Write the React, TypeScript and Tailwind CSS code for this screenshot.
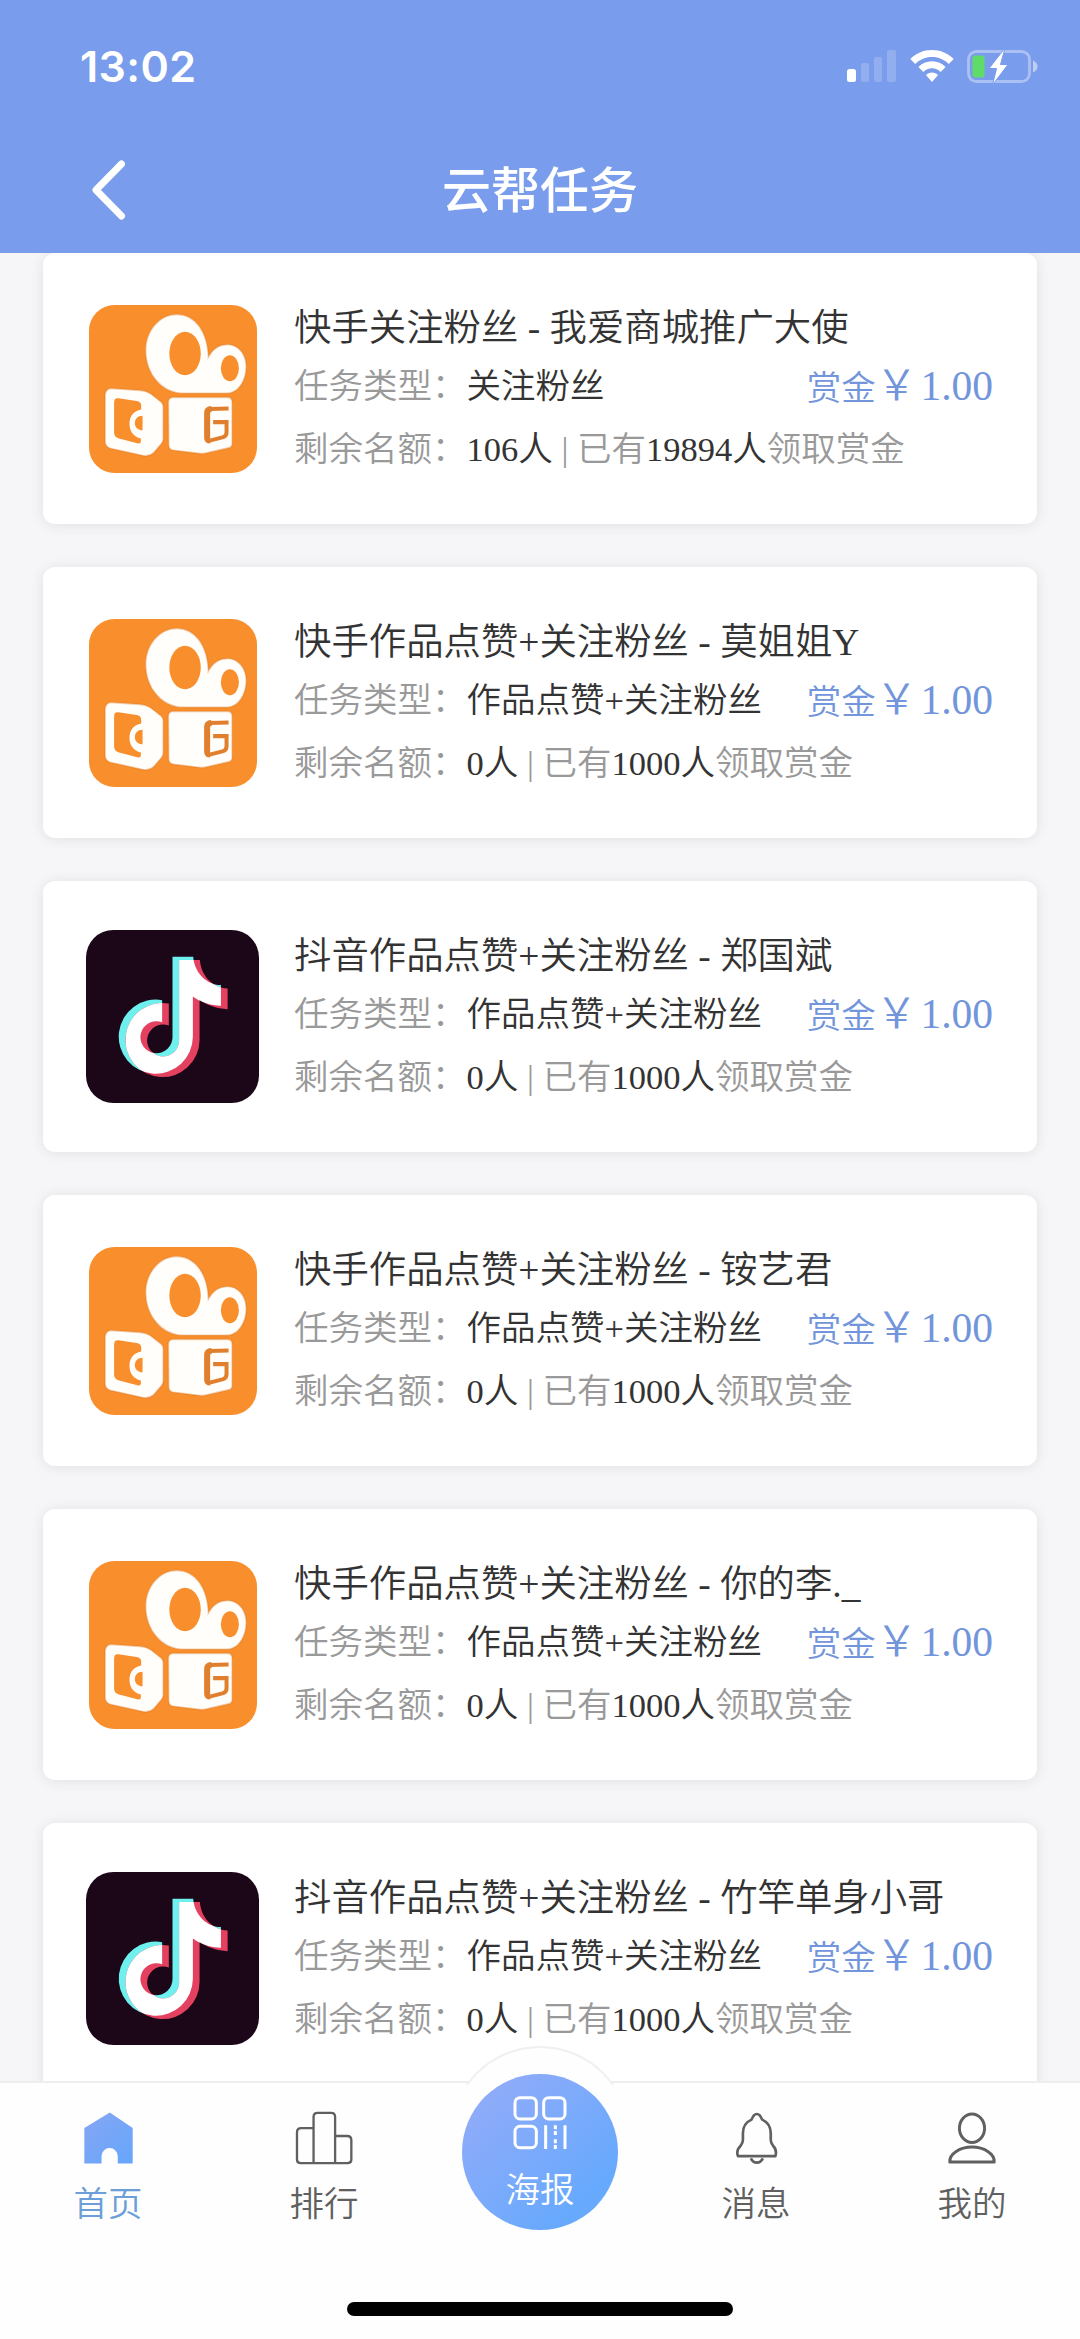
import { ReactNode } from "react";

type App = "kuaishou" | "douyin";

type Task = {
  app: App;
  title: string;
  type: string;
  left: number;
  taken: number;
};

const tasks: Task[] = [
  {
    app: "kuaishou",
    title: "快手关注粉丝 - 我爱商城推广大使",
    type: "关注粉丝",
    left: 106,
    taken: 19894,
  },
  {
    app: "kuaishou",
    title: "快手作品点赞+关注粉丝 - 莫姐姐Y",
    type: "作品点赞+关注粉丝",
    left: 0,
    taken: 1000,
  },
  {
    app: "douyin",
    title: "抖音作品点赞+关注粉丝 - 郑国斌",
    type: "作品点赞+关注粉丝",
    left: 0,
    taken: 1000,
  },
  {
    app: "kuaishou",
    title: "快手作品点赞+关注粉丝 - 铵艺君",
    type: "作品点赞+关注粉丝",
    left: 0,
    taken: 1000,
  },
  {
    app: "kuaishou",
    title: "快手作品点赞+关注粉丝 - 你的李._",
    type: "作品点赞+关注粉丝",
    left: 0,
    taken: 1000,
  },
  {
    app: "douyin",
    title: "抖音作品点赞+关注粉丝 - 竹竿单身小哥",
    type: "作品点赞+关注粉丝",
    left: 0,
    taken: 1000,
  },
];

const KuaishouLogo = () => (
  <svg viewBox="28 30 502 502" className="w-[168px] h-[168px]">
    <rect x="28" y="30" width="502" height="502" rx="76" fill="#f98f2c" />
    <g stroke="#d9711a" strokeWidth="5" strokeOpacity="0.35" fill="#fffefb">
      <path d="M290 58C238 58 197 108 197 165C197 235 245 294 310 294H440C475 294 498 255 498 213C498 175 472 148 442 148C418 148 398 160 385 185C383 110 345 58 290 58Z" />
      <path d="M92 279L180 285Q202 287 216 298L243 319Q250 325 250 334V430Q250 438 245 444L222 471Q208 484 188 480L90 458Q76 452 76 438V298Q78 281 92 279Z" />
      <path d="M265 320Q265 306 280 306H442Q456 306 456 322V443Q456 455 445 457L380 472Q370 475 360 474L280 464Q266 461 266 448Z" />
    </g>
    <g fill="#f98f2c">
      <ellipse cx="315" cy="175" rx="47" ry="65" />
      <ellipse cx="449" cy="219" rx="27" ry="39" />
      <path d="M103 322Q103 307 116 309L170 317Q184 319 184 332V342C162 346 149 362 149 385C149 408 161 424 183 429V438Q183 445 175 444L115 428Q103 424 103 412Z" />
      <path d="M188 361C173 361 165 371 165 383C165 395 174 404 188 404Z" />
    </g>
    <g fill="none" stroke="#e0802e" strokeWidth="12">
      <path d="M445 339L388 341" />
      <path d="M399 380H439V410Q439 421 429 425L386 436" />
      <path
        d="M394 341Q381 342 381 352V426Q381 435 390 435"
        strokeWidth="18"
      />
    </g>
  </svg>
);

const NOTE =
  "M293 110H355C358 155 392 194 438 195V257C406 256 376 245 354 229V350A111 111 0 1 1 262 240V306A48 48 0 1 0 293 350Z";

const DouyinLogo = () => (
  <svg viewBox="34 30 518 518" className="w-[173px] h-[173px]">
    <defs>
      <clipPath id="note">
        <path d={NOTE} transform="translate(20 10)" />
      </clipPath>
    </defs>
    <rect x="34" y="30" width="518" height="518" rx="82" fill="#1c0718" />
    <path d={NOTE} fill="#6df0ee" />
    <path d={NOTE} fill="#e4405f" transform="translate(20 10)" />
    <path d={NOTE} fill="#fff" clipPath="url(#note)" />
  </svg>
);

const StatusBar = () => (
  <div className="flex items-center justify-between h-[132px] pl-[80px] pr-[42px]">
    <span className="font-['Inter',sans-serif] font-semibold text-[43px] tracking-[0.4px]">
      13:02
    </span>
    <div className="flex items-center gap-[13px]">
      <svg viewBox="0 0 50 32" className="w-[50px] h-8" fill="#fff">
        <rect x="0" y="19" width="9" height="13" rx="2.5" />
        <g opacity="0.18">
          <rect x="14" y="13" width="8" height="19" rx="2" />
          <rect x="27" y="7" width="8" height="25" rx="2" />
          <rect x="40" y="0" width="9" height="32" rx="2" />
        </g>
      </svg>
      <svg viewBox="0 0 44 32" className="w-[44px] h-8" fill="#fff">
        <path d="M22 0C13.500 0 5.800 3.400 0.300 9L5.200 14C9.500 9.700 15.400 7 22 7S34.500 9.700 38.800 14L43.700 9C38.200 3.400 30.500 0 22 0Z" />
        <path d="M22 11.300C16.700 11.300 11.900 13.500 8.400 17L13.300 22C15.500 19.700 18.600 18.300 22 18.300S28.500 19.700 30.700 22L35.600 17C32.100 13.500 27.300 11.300 22 11.300Z" />
        <path d="M22 22.500C19.600 22.500 17.500 23.500 16 25.100L22 32L28 25.100C26.500 23.500 24.400 22.500 22 22.500Z" />
      </svg>
      <svg viewBox="0 -2 71 40" className="w-[71px] h-10" fill="none">
        <rect
          x="1.500"
          y="3.500"
          width="61"
          height="30"
          rx="8"
          stroke="#fff"
          strokeOpacity="0.38"
          strokeWidth="2.800"
        />
        <path d="M66 12.500C72 15 72 22 66 24.500Z" fill="#fff" fillOpacity="0.5" />
        <rect x="5.500" y="7.500" width="12" height="22" rx="3" fill="#5fdc68" />
        <path
          d="M38 0L22 20.500H29.500L25.500 37L41 16.500H33.500Z"
          fill="#fff"
          stroke="#7a9cec"
          strokeWidth="1"
        />
      </svg>
    </div>
  </div>
);

const Header = () => (
  <header className="h-[253px] shrink-0 bg-[#7a9cec] text-white">
    <StatusBar />
    <div className="grid grid-cols-[1fr_auto_1fr] items-center h-[116px]">
      <button type="button" className="justify-self-start pl-[90px]">
        <svg viewBox="0 0 38 62" className="w-[38px] h-[62px]" fill="none">
          <path
            d="M31.500 5L6 31L31.500 57"
            stroke="#fff"
            strokeWidth="7"
            strokeLinecap="round"
            strokeLinejoin="round"
          />
        </svg>
      </button>
      <h1 className="pt-1 font-medium text-[49px] leading-[60px]">云帮任务</h1>
    </div>
  </header>
);

const TaskCard = ({ task }: { task: Task }) => (
  <div className="flex h-[271px] shrink-0 pl-[43px] pr-[44px] bg-white rounded-[12px] shadow-[0_1px_14px_rgba(0,0,0,0.09)]">
    <div className="flex justify-center w-[173px] h-[173px] mt-[49px] items-center shrink-0">
      {task.app === "kuaishou" ? <KuaishouLogo /> : <DouyinLogo />}
    </div>
    <div className="flex-1 ml-[35px] mt-[48px] whitespace-nowrap text-[#333]">
      <div className="text-[37.4px] leading-[56px]">{task.title}</div>
      <div className="flex justify-between text-[34.5px] leading-[58px]">
        <div>
          <span className="text-[#999]">任务类型：</span>
          {task.type}
        </div>
        <div className="flex items-baseline text-[#7295db]">
          赏金<span className="text-[41.5px]">￥</span>
          <span className="ml-[3px] text-[41.5px]">1.00</span>
        </div>
      </div>
      <div className="mt-px text-[34.5px] leading-[62px] text-[#999]">
        剩余名额：
        <span className="text-[#333]">{task.left}人</span> | 已有
        <span className="text-[#333]">{task.taken}人</span>领取赏金
      </div>
    </div>
  </div>
);

const Tab = ({
  label,
  active,
  children,
}: {
  label: string;
  active?: boolean;
  children: ReactNode;
}) => (
  <button
    type="button"
    className={`flex flex-col items-center pt-[28px] ${
      active ? "text-[#6c9fd8]" : "text-[#606060]"
    }`}
  >
    <span className="flex items-center h-[54px]">{children}</span>
    <span className="mt-[15px] text-[34.5px] leading-[48px]">{label}</span>
  </button>
);

const TabBar = () => (
  <nav className="relative h-[258px] shrink-0 bg-[#fefefe] border-t-2 border-[#eee]">
    {/* raised rim behind the centre button */}
    <div className="absolute left-1/2 -translate-x-1/2 top-[-37px] w-[180px] h-[39px] overflow-hidden">
      <div className="w-[180px] h-[180px] rounded-full bg-[#fefefe] border-2 border-[#f0f0f0]" />
    </div>
    <div className="grid grid-cols-5 h-[200px]">
      <Tab label="首页" active>
        <svg viewBox="250 214 148 156" className="w-[49px] h-[52px]">
          <defs>
            <linearGradient id="home" x1="0" y1="0" x2="1" y2="1">
              <stop offset="0" stopColor="#86a6f4" />
              <stop offset="1" stopColor="#66a6fb" />
            </linearGradient>
          </defs>
          <path
            d="M251 262L328 215L397 262V369H352V347A24.500 24.500 0 0 0 303 347V369H251Z"
            fill="url(#home)"
          />
        </svg>
      </Tab>
      <Tab label="排行">
        <svg
          viewBox="885 210 175 162"
          className="w-[58px] h-[54px]"
          fill="none"
          stroke="currentColor"
          strokeWidth="7"
        >
          <path d="M941 261H904Q891 261 891 274V356Q891 367 902 367H1044Q1055 367 1055 356V298Q1055 285 1042 285H1006" />
          <path d="M941 367V227Q941 215 953 215H994Q1006 215 1006 227V367" />
        </svg>
      </Tab>
      <button
        type="button"
        className="relative flex flex-col items-center justify-self-center w-[156px] h-[156px] mt-[-9px] pt-[22px] rounded-full text-white bg-linear-to-br from-[#8eabf9] from-15% to-[#66a9fd] to-80%"
      >
        <svg
          viewBox="338 198 162 162"
          className="w-[54px] h-[54px]"
          fill="none"
          stroke="#fff"
          strokeWidth="9"
        >
          <rect x="344" y="203" width="64" height="64" rx="15" />
          <rect x="430" y="203" width="64" height="64" rx="15" />
          <rect x="344" y="289" width="64" height="64" rx="15" />
          <path d="M436 286V357M494 286V357" />
          <path d="M465 286V315M465 328V357" strokeDasharray="12 5" />
        </svg>
        <span className="mt-[16px] text-[34.5px] leading-[48px]">海报</span>
      </button>
      <Tab label="消息">
        <svg
          viewBox="226 212 128 160"
          className="w-[43px] h-[53px]"
          fill="none"
          stroke="currentColor"
          strokeWidth="8"
          strokeLinejoin="round"
        >
          <path d="M234 345C229 332 234 322 242 314Q249 306 249 296V276C249 256 259 242 275 235C280 222 284 218 291 218S302 222 307 235C323 242 333 256 333 276V296Q333 306 340 314C348 322 351 332 347 345Z" />
          <path d="M273 352Q279 365 291 365T309 352" />
        </svg>
      </Tab>
      <Tab label="我的">
        <svg
          viewBox="861 212 150 160"
          className="w-[50px] h-[53px]"
          fill="none"
          stroke="currentColor"
          strokeWidth="9"
          strokeLinejoin="round"
        >
          <ellipse cx="936" cy="261" rx="38" ry="43" />
          <path d="M869 363C867 338 900 318 936 318S1005 338 1003 363Z" />
        </svg>
      </Tab>
    </div>
    <div className="w-[386px] h-[14px] mx-auto mt-[19px] rounded-full bg-black" />
  </nav>
);

export default function App() {
  return (
    <div className="flex flex-col w-[1080px] h-[2339px] overflow-hidden bg-[#f6f6f8] font-[350] font-['Liberation_Serif','Noto_Sans_CJK_SC',sans-serif]">
      <Header />
      <main className="flex flex-col flex-1 min-h-0 gap-[43px] px-[43px] overflow-hidden">
        {tasks.map((task) => (
          <TaskCard key={task.title} task={task} />
        ))}
      </main>
      <TabBar />
    </div>
  );
}
